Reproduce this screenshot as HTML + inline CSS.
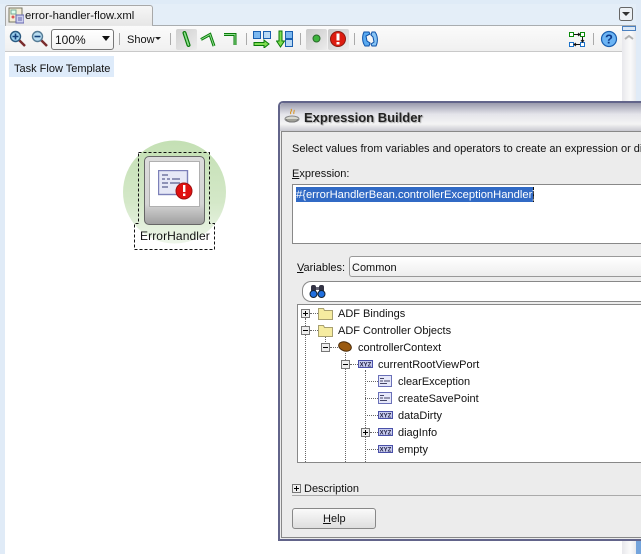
<!DOCTYPE html>
<html><head><meta charset="utf-8">
<style>
html,body{margin:0;padding:0;background:#fff}
#p{position:relative;width:641px;height:554px;overflow:hidden;background:#fff;font-family:"Liberation Sans",sans-serif;font-size:11px;color:#111}
#p div,#p span.a,#p svg{position:absolute}
.t{white-space:nowrap;line-height:14px}
.dv{border-left:1px dotted #666;width:0}
.dh{border-top:1px dotted #666;height:0}
.sep{width:1px;height:12px;background:#aaa;top:33px}
u{text-decoration:underline}
</style></head><body><div id="p">
<div style="left:0;top:0;width:641px;height:4px;background:#dfebf7"></div>
<div style="left:0;top:4px;width:641px;height:21px;background:#e4eef8"></div>
<div style="left:0;top:25px;width:5px;height:529px;background:#e0ebf7"></div>
<div style="left:636px;top:4px;width:5px;height:550px;background:#e0ebf7"></div>
<div style="left:5px;top:5px;width:148px;height:21px;background:linear-gradient(#f6f6f6,#e6e6e6);border:1px solid #a8a8a8;border-bottom:0;border-radius:3px 3px 0 0;box-sizing:border-box"></div>
<div style="left:5px;top:25px;width:631px;height:1px;background:#a9adb0"></div>
<div style="left:6px;top:25px;width:146px;height:1px;background:#e8e8e8"></div>
<svg style="left:8px;top:7px" width="16" height="17"><rect x="1" y="1" width="13" height="14" fill="#f3ecd4" stroke="#776"/><rect x="3" y="3" width="5" height="4" fill="#dfe" stroke="#7a9"/><circle cx="5" cy="10" r="1.5" fill="#d55"/><rect x="8" y="8" width="8" height="8" fill="#cdd0ee" stroke="#6668b0"/><path d="M10 11h4M10 13h4" stroke="#6668b0"/></svg>
<div class="t" style="left:25px;top:9px;font-size:11.3px">error-handler-flow.xml</div>
<svg style="left:619px;top:7px" width="15" height="15"><rect x=".5" y=".5" width="13" height="13" rx="2" fill="#edf1f5" stroke="#666"/><path d="M3 5h8l-4 4z" fill="#333"/></svg>

<div style="left:5px;top:26px;width:617px;height:25px;background:linear-gradient(#fbfbfb,#f0f0f0)"></div>
<div style="left:5px;top:51px;width:617px;height:1px;background:#c9c9c9"></div>
<svg style="left:9px;top:30px" width="18" height="18"><path d="M10 10l6 6" stroke="#7a2c2c" stroke-width="2.5"/><circle cx="6.500" cy="6.500" r="5" fill="#9cd0ee" stroke="#2a5a80" stroke-width="1.400"/><path d="M3.500 6.500h6M6.500 3.500v6" stroke="#14407a" stroke-width="1.600"/></svg>
<svg style="left:31px;top:30px" width="18" height="18"><path d="M10 10l6 6" stroke="#7a2c2c" stroke-width="2.5"/><circle cx="6.500" cy="6.500" r="5" fill="#b8dcf0" stroke="#557b95" stroke-width="1.400"/><path d="M3.500 6.500h6" stroke="#14407a" stroke-width="1.600"/></svg>
<div style="left:51px;top:29px;width:63px;height:21px;box-sizing:border-box;border:1px solid #777;border-radius:3px;background:linear-gradient(#fff,#f2f2f2)"></div>
<div class="t" style="left:55px;top:33px;font-size:12px">100%</div>
<svg style="left:101px;top:36px" width="10" height="6"><path d="M1 0h8l-4 5z" fill="#111"/></svg>
<div class="sep" style="left:119px"></div>
<div class="t" style="left:127px;top:33px">Show</div>
<svg style="left:155px;top:36px" width="7" height="5"><path d="M0 1h6l-3 3z" fill="#222"/></svg>
<div class="sep" style="left:170px"></div>
<div style="left:176px;top:29px;width:21px;height:21px;border-radius:2px;background:linear-gradient(135deg,#cfcfcf,#ececec)"></div>
<svg style="left:180px;top:30px" width="14" height="18"><path d="M4.500 3l4 12" stroke="#0a7a0a" stroke-width="4" stroke-linecap="round"/><path d="M4.500 3l4 12" stroke="#8fe08f" stroke-width="1.600" stroke-linecap="round"/></svg>
<svg style="left:199px;top:30px" width="18" height="18"><path d="M2 9.500l9-5 4 11.500" fill="none" stroke="#0a7a0a" stroke-width="3"/><path d="M2 9.500l9-5 4 11.500" fill="none" stroke="#8fe08f" stroke-width="1"/></svg>
<svg style="left:222px;top:30px" width="16" height="18"><path d="M2 4.500h11v10.500" fill="none" stroke="#0a7a0a" stroke-width="3"/><path d="M2 4.500h11v10.500" fill="none" stroke="#8fe08f" stroke-width="1"/></svg>
<div class="sep" style="left:246px"></div>
<svg style="left:253px;top:30px" width="18" height="18"><rect x=".5" y="1.500" width="7" height="7" fill="#7cb8f0" stroke="#1a5fb0"/><rect x="10.500" y="1.500" width="7" height="7" fill="#b8d8f4" stroke="#1a5fb0"/><path d="M1 12.500h10v-2.500l5 4-5 4v-2.500H1z" fill="#7fdc50" stroke="#0a7a0a"/></svg>
<svg style="left:276px;top:30px" width="18" height="18"><rect x="9.500" y="1.500" width="7" height="7" fill="#7cb8f0" stroke="#1a5fb0"/><rect x="9.500" y="9.500" width="7" height="7" fill="#b8d8f4" stroke="#1a5fb0"/><path d="M3 1h3v10h2.500l-4 6-4-6H3z" fill="#7fdc50" stroke="#0a7a0a"/></svg>
<div class="sep" style="left:300px"></div>
<div style="left:306px;top:29px;width:21px;height:21px;border-radius:2px;background:linear-gradient(135deg,#c8c8c8,#ececec)"></div>
<svg style="left:311px;top:33px" width="11" height="11"><circle cx="5.500" cy="5.500" r="3.500" fill="#3fb53f" stroke="#2a6a2a"/></svg>
<div style="left:328px;top:29px;width:21px;height:21px;border-radius:2px;background:linear-gradient(135deg,#c8c8c8,#ececec)"></div>
<svg style="left:329px;top:30px" width="18" height="18"><circle cx="9" cy="9" r="7.500" fill="#dd1c10" stroke="#8a1a10"/><rect x="7.500" y="3.500" width="3" height="7" fill="#fff"/><rect x="7.500" y="12" width="3" height="2.500" fill="#fff"/></svg>
<div class="sep" style="left:354px"></div>
<svg style="left:361px;top:30px" width="18" height="18"><path d="M3 2h5l1 2-4 2 1 5 3 2-1 3H4C1 12 1 6 3 2z" fill="#5aaaf0" stroke="#0c50a8"/><path d="M15 16h-4l-1-2 3-2-1-5-2-2 1-3h3c3 4 3 10 1 14z" fill="#88c4f4" stroke="#0c50a8"/></svg>
<svg style="left:568px;top:31px" width="18" height="18"><rect x="1.500" y="1.500" width="4" height="4" fill="#fff" stroke="#0a8a0a"/><rect x="12.500" y="1.500" width="4" height="4" fill="#fff" stroke="#0a8a0a"/><rect x="1.500" y="11.500" width="4" height="4" fill="#fff" stroke="#1a70c8"/><rect x="12.500" y="11.500" width="4" height="4" fill="#fff" stroke="#1a70c8"/><path d="M6 3.500h6M10 2l2 1.500L10 5M12 13.500H6M8 12l-2 1.500L8 15M14.500 6v5M13 9l1.500 2L16 9" fill="none" stroke="#111"/></svg>
<div class="sep" style="left:593px"></div>
<svg style="left:600px;top:30px" width="18" height="18"><circle cx="9" cy="9" r="7.500" fill="#6cb4f4" stroke="#1a5fb0" stroke-width="1.200"/><text x="9" y="13.500" text-anchor="middle" font-family="Liberation Sans" font-weight="bold" font-size="13" fill="#0c3a8a">?</text></svg>
<div style="left:622px;top:26px;width:14px;height:528px;background:linear-gradient(90deg,#e8e8ec,#fafafa 60%,#e8eaee)"></div>
<div style="left:622px;top:26px;width:14px;height:5px;box-sizing:border-box;border:1px solid #4a80c0;background:#dbe8f6"></div>
<svg style="left:624px;top:34px" width="10" height="7"><path d="M1 5l4-3 4 3" fill="none" stroke="#b0b0b0" stroke-width="2"/></svg>
<div style="left:636px;top:541px;width:5px;height:13px;background:#74a4dc"></div>

<div style="left:9px;top:56px;width:105px;height:21px;background:#deebfa"></div>
<div class="t" style="left:14px;top:62px">Task Flow Template</div>

<svg style="left:120px;top:138px" width="110" height="115">
<defs><linearGradient id="g" x1="0" y1="0" x2="0" y2="1"><stop offset="0" stop-color="#c4e0b4"/><stop offset=".6" stop-color="#d4e8c8"/><stop offset="1" stop-color="#eef6ea"/></linearGradient></defs>
<circle cx="54.500" cy="54" r="51.500" fill="url(#g)"/>
</svg>
<div style="left:144px;top:156px;width:61px;height:69px;box-sizing:border-box;border:1px solid #666;border-radius:5px;background:linear-gradient(#dcdcdc 0,#d4d4d4 70%,#a0a0a0)"></div>
<div style="left:149px;top:161px;width:51px;height:46px;box-sizing:border-box;border:1px solid #b0b0b0;background:#fff"></div>
<svg style="left:158px;top:170px" width="36" height="30">
<rect x=".5" y=".5" width="29" height="24" fill="#e6e8f6" stroke="#7c80b8" stroke-width="1.400"/>
<path d="M4 5h6M4 9h3M9 9h3M14 9h8M4 13h6M12 13h10M4 17h6" stroke="#5a5e90" stroke-width="1.200"/>
<circle cx="26" cy="21" r="8" fill="#e01010" stroke="#a01010"/><rect x="25" y="15" width="2.400" height="7" fill="#fff"/><rect x="25" y="23.500" width="2.400" height="2.500" fill="#fff"/>
</svg>
<svg style="left:130px;top:146px" width="90" height="110"><path d="M8.500 6.500h71v71h5v26h-80v-26h4z" fill="none" stroke="#111" stroke-dasharray="3 2"/></svg>
<div class="t" style="left:140px;top:229px;font-size:12px;letter-spacing:.1px">ErrorHandler</div>

<div style="left:278px;top:101px;width:363px;height:440px;box-sizing:border-box;border:2px solid #62648a;border-right:0;border-radius:5px 0 0 0;background:#ececec"></div>
<div style="left:280px;top:103px;width:361px;height:28px;background:linear-gradient(#9a9aac,#e4e4ea 40%,#f4f4f4 75%,#c8c8d0);border-radius:4px 0 0 0"></div>
<div style="left:281px;top:131px;width:360px;height:407px;border:1px solid #888;border-right:0;box-sizing:border-box"></div>
<svg style="left:283px;top:108px" width="18" height="18"><path d="M8 1c2 2-2 3 0 5M11 2c1 1-1 2 0 4" stroke="#d89018" fill="none"/><ellipse cx="9" cy="11" rx="7" ry="3" fill="#d8d8d0" stroke="#888"/><path d="M3 11c1 4 11 4 12 0" fill="#a0a098" stroke="#777"/></svg>
<div class="t" style="left:304px;top:111px;font-size:13px;font-weight:bold;color:#222;text-shadow:1px 1px 1px #aaa">Expression Builder</div>
<div class="t" style="left:292px;top:142px;width:349px;overflow:hidden">Select values from variables and operators to create an expression or dir</div>
<div class="t" style="left:292px;top:167px"><u>E</u>xpression:</div>
<div style="left:292px;top:184px;width:349px;height:60px;box-sizing:border-box;border:1px solid #888;border-right:0;background:#fff"></div>
<div style="left:296px;top:187px;width:237px;height:15px;background:#316ac5;border-right:1px solid #111"></div>
<div class="t" style="left:296px;top:188px;color:#fff;font-size:11.2px">#{errorHandlerBean.controllerExceptionHandler}</div>

<div class="t" style="left:297px;top:261px"><u>V</u>ariables:</div>
<div style="left:349px;top:256px;width:292px;height:21px;box-sizing:border-box;border:1px solid #999;border-right:0;border-radius:3px 0 0 3px;background:linear-gradient(#fff,#eee)"></div>
<div class="t" style="left:352px;top:261px">Common</div>
<div style="left:302px;top:281px;width:339px;height:21px;box-sizing:border-box;border:1px solid #888;border-right:0;border-radius:9px 0 0 9px;background:#fff"></div>
<svg style="left:309px;top:284px" width="18" height="15"><rect x="2" y="1" width="5" height="7" rx="2" fill="#334"/><rect x="10" y="1" width="5" height="7" rx="2" fill="#334"/><rect x="7" y="3" width="3" height="3" fill="#667"/><circle cx="4.500" cy="10" r="3.500" fill="#2070e0" stroke="#123"/><circle cx="12.500" cy="10" r="3.500" fill="#2070e0" stroke="#123"/></svg>

<div style="left:297px;top:304px;width:344px;height:159px;box-sizing:border-box;border:1px solid #888;border-right:0;background:#fff"></div>
<div class="dv" style="left:305px;top:318px;height:144px"></div>
<div class="dv" style="left:325px;top:336px;height:8px"></div>
<div class="dv" style="left:345px;top:353px;height:109px"></div>
<div class="dv" style="left:365px;top:370px;height:92px"></div>
<div class="dh" style="left:310px;top:313px;width:8px"></div>
<div class="dh" style="left:310px;top:330px;width:8px"></div>
<div class="dh" style="left:330px;top:347px;width:8px"></div>
<div class="dh" style="left:350px;top:364px;width:8px"></div>
<div class="dh" style="left:365px;top:381px;width:13px"></div>
<div class="dh" style="left:365px;top:398px;width:13px"></div>
<div class="dh" style="left:365px;top:415px;width:13px"></div>
<div class="dh" style="left:370px;top:432px;width:8px"></div>
<div class="dh" style="left:365px;top:449px;width:13px"></div>

<svg style="left:301px;top:309px" width="10" height="9"><rect x=".5" y=".5" width="8" height="8" fill="#eee" stroke="#777"/><path d="M2 4.500h5M4.500 2v5" stroke="#000"/></svg>
<svg style="left:301px;top:326px" width="10" height="9"><rect x=".5" y=".5" width="8" height="8" fill="#eee" stroke="#777"/><path d="M2 4.500h5" stroke="#000"/></svg>
<svg style="left:321px;top:343px" width="10" height="9"><rect x=".5" y=".5" width="8" height="8" fill="#eee" stroke="#777"/><path d="M2 4.500h5" stroke="#000"/></svg>
<svg style="left:341px;top:360px" width="10" height="9"><rect x=".5" y=".5" width="8" height="8" fill="#eee" stroke="#777"/><path d="M2 4.500h5" stroke="#000"/></svg>
<svg style="left:361px;top:428px" width="10" height="9"><rect x=".5" y=".5" width="8" height="8" fill="#eee" stroke="#777"/><path d="M2 4.500h5M4.500 2v5" stroke="#000"/></svg>

<svg style="left:318px;top:305px" width="16" height="16"><path d="M.5 3.500h5l1 2h8v9H.5z" fill="#f6eca0" stroke="#a8a070"/></svg>
<svg style="left:318px;top:322px" width="16" height="16"><path d="M.5 3.500h5l1 2h8v9H.5z" fill="#f6eca0" stroke="#a8a070"/></svg>
<div class="t" style="left:338px;top:307px">ADF Bindings</div>
<div class="t" style="left:338px;top:324px">ADF Controller Objects</div>
<svg style="left:338px;top:340px" width="15" height="13"><ellipse cx="7" cy="6.500" rx="6.500" ry="4.500" fill="#9a5a10" stroke="#4a2a08" transform="rotate(18 7 6.500)"/></svg>
<div class="t" style="left:358px;top:341px">controllerContext</div>

<svg style="left:358px;top:360px" width="16" height="8"><rect x=".5" y=".5" width="14" height="7" fill="#c8ccf0" stroke="#4a50a8"/><text x="7.500" y="6.500" font-size="6" font-weight="bold" text-anchor="middle" font-family="Liberation Sans" fill="#224">XYZ</text></svg>
<div class="t" style="left:378px;top:358px">currentRootViewPort</div>
<svg style="left:378px;top:375px" width="15" height="13"><rect x=".5" y=".5" width="13" height="11" fill="#e6e8fa" stroke="#6a70b8"/><path d="M2 3.500h4M2 6h3M6 6h6M2 8.500h7" stroke="#446"/></svg>
<div class="t" style="left:398px;top:375px">clearException</div>
<svg style="left:378px;top:392px" width="15" height="13"><rect x=".5" y=".5" width="13" height="11" fill="#e6e8fa" stroke="#6a70b8"/><path d="M2 3.500h4M2 6h3M6 6h6M2 8.500h7" stroke="#446"/></svg>
<div class="t" style="left:398px;top:392px">createSavePoint</div>
<svg style="left:378px;top:411px" width="16" height="8"><rect x=".5" y=".5" width="14" height="7" fill="#c8ccf0" stroke="#4a50a8"/><text x="7.500" y="6.500" font-size="6" font-weight="bold" text-anchor="middle" font-family="Liberation Sans" fill="#224">XYZ</text></svg>
<div class="t" style="left:398px;top:409px">dataDirty</div>
<svg style="left:378px;top:428px" width="16" height="8"><rect x=".5" y=".5" width="14" height="7" fill="#c8ccf0" stroke="#4a50a8"/><text x="7.500" y="6.500" font-size="6" font-weight="bold" text-anchor="middle" font-family="Liberation Sans" fill="#224">XYZ</text></svg>
<div class="t" style="left:398px;top:426px">diagInfo</div>
<svg style="left:378px;top:445px" width="16" height="8"><rect x=".5" y=".5" width="14" height="7" fill="#c8ccf0" stroke="#4a50a8"/><text x="7.500" y="6.500" font-size="6" font-weight="bold" text-anchor="middle" font-family="Liberation Sans" fill="#224">XYZ</text></svg>
<div class="t" style="left:398px;top:443px">empty</div>

<svg style="left:292px;top:484px" width="10" height="9"><rect x=".5" y=".5" width="8" height="8" fill="#eee" stroke="#777"/><path d="M2 4.500h5M4.500 2v5" stroke="#000"/></svg>
<div class="t" style="left:304px;top:482px">Description</div>
<div style="left:292px;top:495px;width:349px;height:1px;background:#aaa"></div>
<div style="left:292px;top:508px;width:84px;height:21px;box-sizing:border-box;border:1px solid #888;border-radius:3px;background:linear-gradient(#fafafa,#dedede)"></div>
<div class="t" style="left:323px;top:512px"><u>H</u>elp</div>
</div></body></html>
